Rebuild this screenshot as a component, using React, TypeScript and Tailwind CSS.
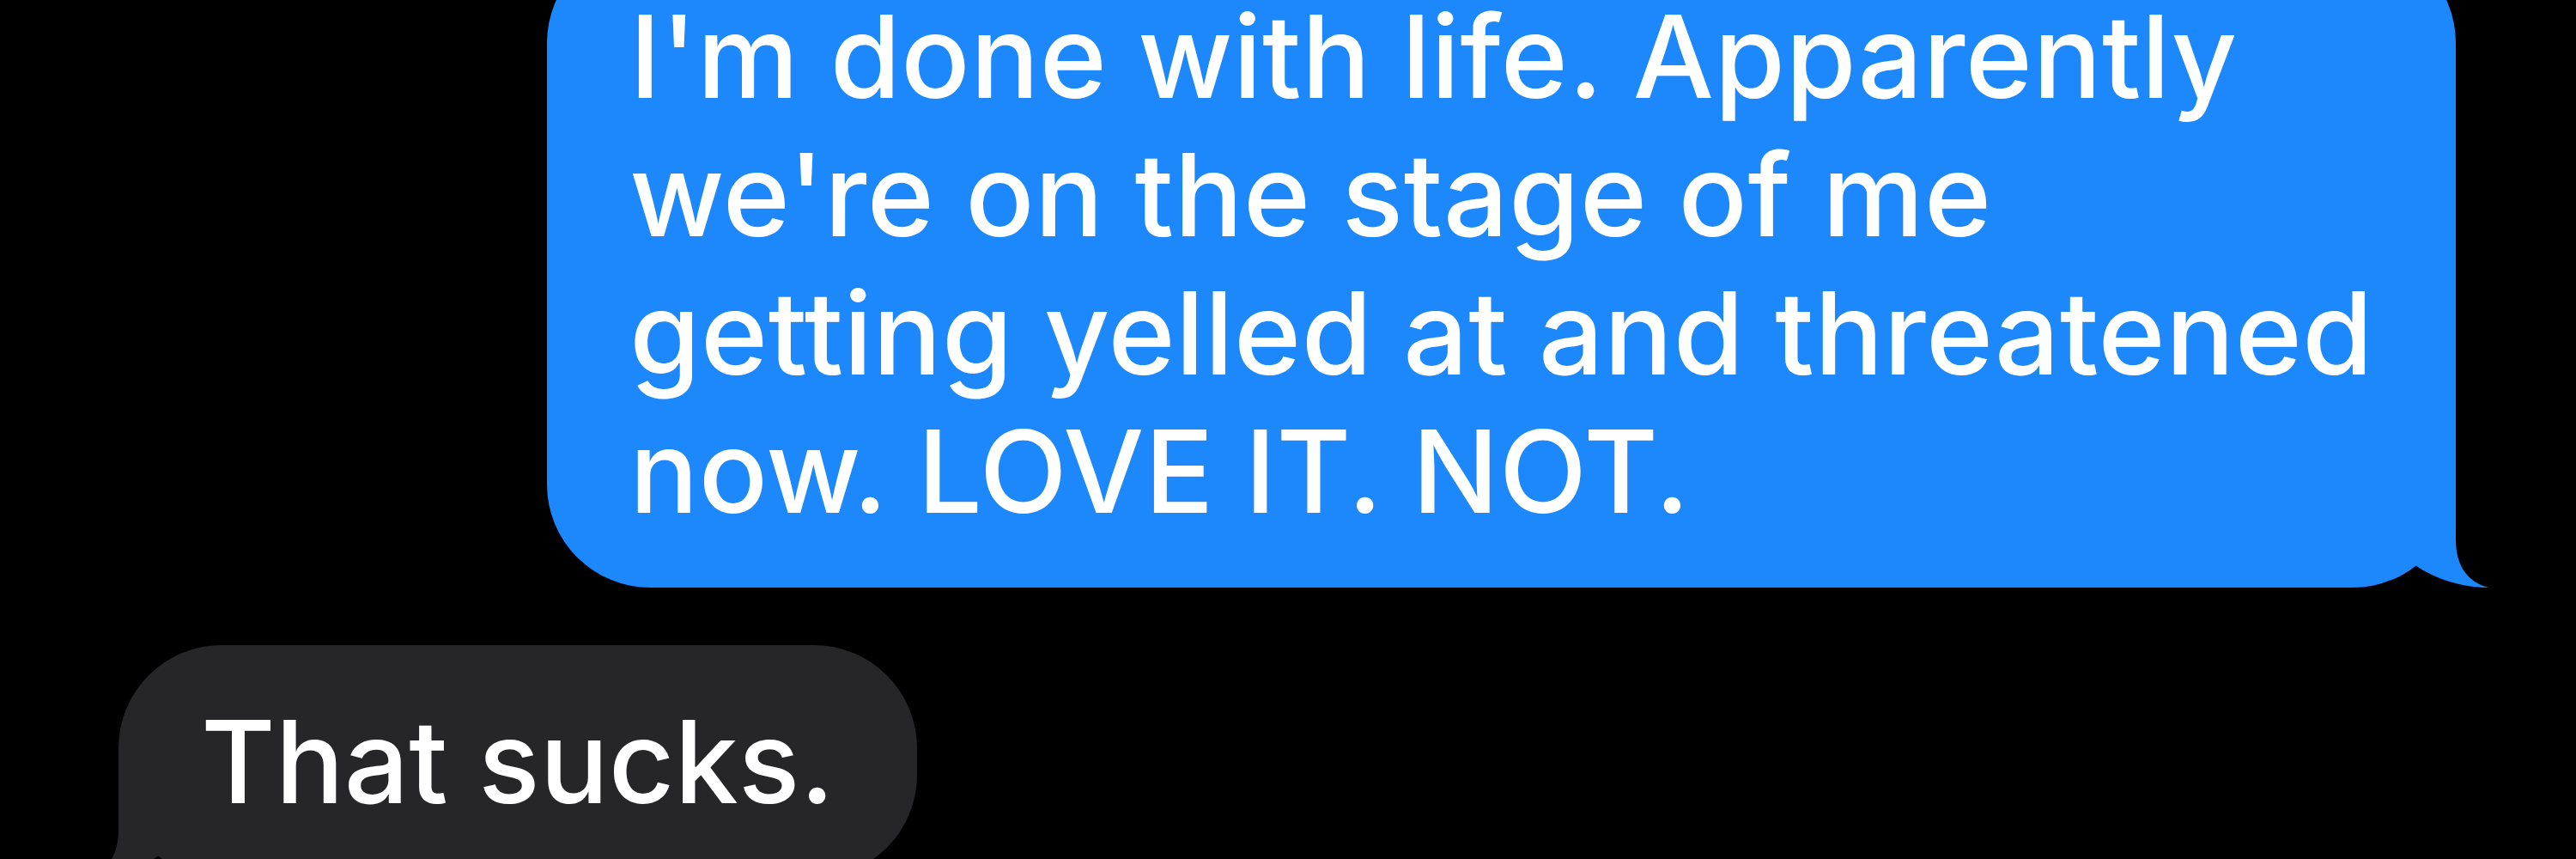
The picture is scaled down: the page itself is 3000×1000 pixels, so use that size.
const lines = [
  "I'm done with life. Apparently",
  "we're on the stage of me",
  "getting yelled at and threatened",
  "now. LOVE IT. NOT.",
]

function SentTail() {
  return (
    <svg
      className="absolute bottom-0 right-[-38px]"
      width="118"
      height="124"
      viewBox="0 0 118 124"
    >
      <path d="M80,0 L80,68 C80,100 95,118 118,124 C88,124 55,114 33,98 L0,71 L0,0 Z" fill="#1c88fb" />
    </svg>
  )
}

function ReceivedTail() {
  return (
    <svg
      className="absolute bottom-0 left-[-38px]"
      width="118"
      height="124"
      viewBox="0 0 118 124"
    >
      <path d="M38,0 L38,68 C38,100 23,118 0,124 C30,124 63,114 85,98 L118,71 L118,0 Z" fill="#262628" />
    </svg>
  )
}

export default function App() {
  return (
    <div className="h-[1000px] w-full overflow-hidden bg-black font-['Inter','Liberation_Sans',sans-serif] font-medium text-white">
      <div className="-mt-[70px] flex flex-col gap-[67px] pl-[138px] pr-[140px]">
        <div className="relative self-end rounded-[120px] bg-[#1c88fb] px-[96px] py-[55px] text-[133px] leading-[161px] tracking-[0.5px]">
          {lines.map((line) => (
            <div key={line} className="whitespace-nowrap">
              {line}
            </div>
          ))}
          <SentTail />
        </div>

        <div className="relative self-start rounded-[120px] bg-[#262628] px-[96px] py-[55px] text-[133px] leading-[161px]">
          <div className="whitespace-nowrap">That sucks.</div>
          <ReceivedTail />
        </div>
      </div>
    </div>
  )
}
